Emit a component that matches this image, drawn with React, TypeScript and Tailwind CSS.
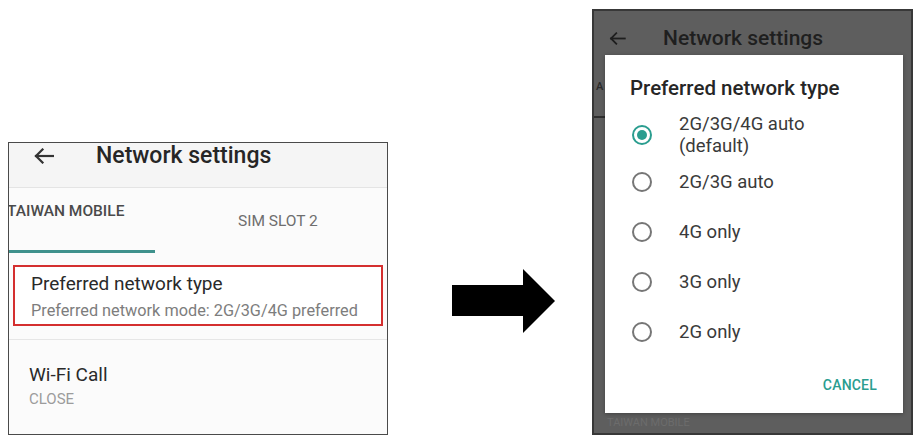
import React from 'react'

const font = { fontFamily: 'Roboto, "Noto Sans", sans-serif' }

function BackArrow({ w, h, color }: { w: number; h: number; color: string }) {
  return (
    <svg width={w} height={h} viewBox="0 0 20 16" fill="none" stroke={color} strokeWidth="2.2" strokeLinecap="square">
      <path d="M2 8H19" />
      <path d="M8.5 1.5L2 8l6.5 6.5" />
    </svg>
  )
}

function Radio({ checked }: { checked?: boolean }) {
  return checked ? (
    <div className="w-[20px] h-[20px] rounded-full border-[2.5px] border-[#2a9d8f] flex items-center justify-center shrink-0">
      <div className="w-[10px] h-[10px] rounded-full bg-[#2a9d8f]" />
    </div>
  ) : (
    <div className="w-[20px] h-[20px] rounded-full border-2 border-[#767676] shrink-0" />
  )
}

function SettingsScreen() {
  return (
    <div className="ml-[8px] mt-[142px] w-[380px] h-[293px] border border-[#4a4a4a] bg-[#fbfbfb] overflow-hidden flex flex-col shrink-0">
      {/* Toolbar */}
      <div className="h-[45px] bg-[#f5f5f5] border-b border-[#e4e4e4] shrink-0">
        <div className="h-[26px] flex items-center pl-[25px]">
          <BackArrow w={20} h={16} color="#333" />
          <span className="ml-[42px] text-[23px] font-medium text-[#262626] leading-[26px]">Network settings</span>
        </div>
      </div>

      {/* Tabs */}
      <div className="h-[65px] flex shrink-0">
        <div className="w-[146px] flex flex-col">
          <span className="pt-[15px] -ml-[2px] text-[15.5px] font-medium text-[#4a4a4a] leading-[16px] whitespace-nowrap">TAIWAN MOBILE</span>
          <div className="mt-auto h-[3px] bg-[#3f918c]" />
        </div>
        <span className="ml-[83px] pt-[25px] text-[15.5px] text-[#6e6e6e] leading-[16px] whitespace-nowrap">SIM SLOT 2</span>
      </div>

      {/* Highlighted item */}
      <div className="mt-[12px] mx-[4px] h-[61px] border-2 border-[#d42f2f] bg-white px-[16px] pt-[6px] shrink-0">
        <div className="text-[19px] text-[#2a2a2a] leading-[22px] whitespace-nowrap">Preferred network type</div>
        <div className="mt-[8px] text-[16.3px] text-[#7d7d7d] leading-[16px] whitespace-nowrap">
          Preferred network mode: 2G/3G/4G preferred
        </div>
      </div>

      <div className="mt-[13px] h-px bg-[#e6e6e6] shrink-0" />

      <div className="pl-[20px] pt-[24px]">
        <div className="text-[19px] text-[#2a2a2a] leading-[22px]">Wi-Fi Call</div>
        <div className="mt-[6px] text-[15px] text-[#9c9c9c] leading-[14px]">CLOSE</div>
      </div>
    </div>
  )
}

function NextArrow() {
  return (
    <svg className="ml-[64px] mt-[269px] shrink-0" width="103" height="64" viewBox="0 0 103 64">
      <polygon points="0,16 71,16 71,0 103,32 71,64 71,47 0,47" fill="#000" />
    </svg>
  )
}

const options = ['2G/3G/4G auto', '2G/3G auto', '4G only', '3G only', '2G only']

function DialogScreen() {
  return (
    <div className="ml-[37px] mt-[9px] w-[321px] h-[426px] border-2 border-[#383838] bg-[#5e5e5e] overflow-hidden flex flex-col shrink-0">
      {/* Dimmed toolbar */}
      <div className="h-[44px] flex items-start pt-[15px] pl-[15px] shrink-0">
        <div className="h-[24px] flex items-center">
          <BackArrow w={17} h={13} color="#1e1e1e" />
        </div>
        <span className="ml-[37px] text-[21px] font-medium text-[#1f1f1f] leading-[24px]">Network settings</span>
      </div>

      <div className="flex shrink-0">
        {/* Dimmed tab fragment */}
        <div className="w-[11px] flex flex-col">
          <span className="mt-[25px] pl-[2px] text-[11px] font-medium text-[#2a2a2a] leading-[14px]">A</span>
          <div className="mt-[22px] h-[2px] bg-[#2e2e2e]" />
        </div>

        {/* Dialog */}
        <div className="w-[298px] h-[358px] bg-white flex flex-col shadow-[0_1px_4px_rgba(0,0,0,0.3)]">
          <div className="pl-[25px] pt-[20px] text-[20.5px] font-medium text-[#262626] leading-[26px] whitespace-nowrap">
            Preferred network type
          </div>

          <div className="mt-[12px] h-[44px] flex items-center pl-[27px]">
            <Radio checked />
            <div className="ml-[27px] text-[18.5px] text-[#3a3a3a] leading-[22px]">
              <div>{options[0]}</div>
              <div>(default)</div>
            </div>
          </div>
          {options.slice(1).map((o) => (
            <div key={o} className="h-[50px] flex items-center pl-[27px]">
              <Radio />
              <span className="ml-[27px] text-[18.5px] text-[#3a3a3a] leading-[22px]">{o}</span>
            </div>
          ))}

          <div className="mt-[19px] flex justify-end pr-[26px]">
            <span className="text-[14px] font-medium text-[#2a9d8f] leading-[18px] tracking-[0.2px]">CANCEL</span>
          </div>
        </div>
      </div>

      {/* Dimmed content under dialog */}
      <div className="pl-[13px] pt-[3px] text-[11px] text-[#6c6c6c] leading-[14px]">TAIWAN MOBILE</div>
    </div>
  )
}

export default function App() {
  return (
    <div className="w-[917px] h-[440px] bg-white flex items-start overflow-hidden" style={font}>
      <SettingsScreen />
      <NextArrow />
      <DialogScreen />
    </div>
  )
}
